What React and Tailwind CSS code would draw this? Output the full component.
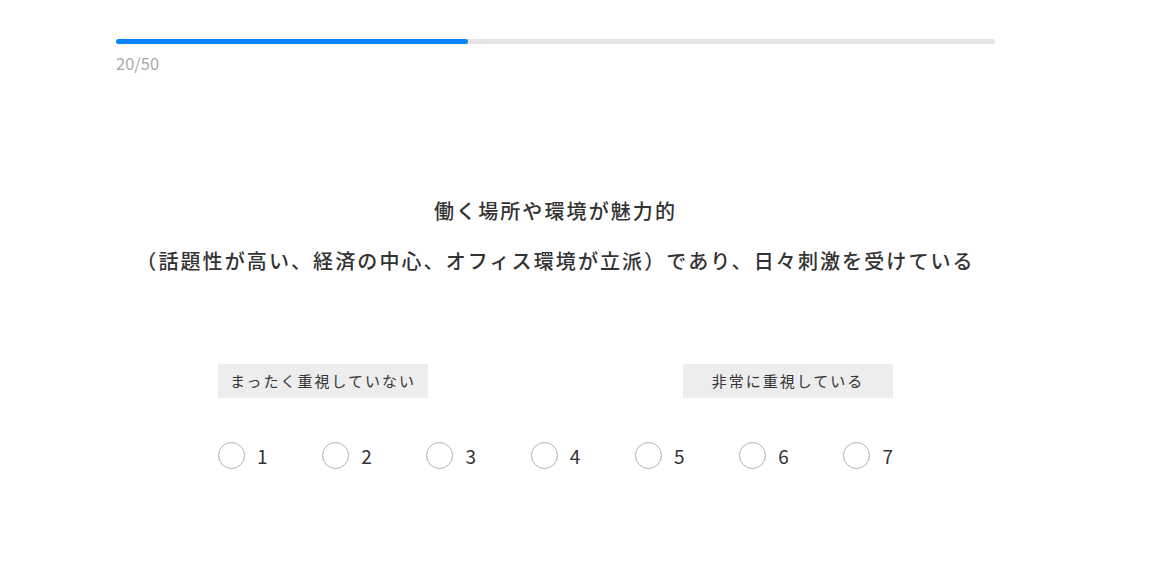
import { useState } from 'react';

const QUESTION_TITLE = '働く場所や環境が魅力的';
const QUESTION_SUB = '（話題性が高い、経済の中心、オフィス環境が立派）であり、日々刺激を受けている';

export default function App() {
  const [value, setValue] = useState(null);
  const current = 20;
  const total = 50;
  const pct = (current / total) * 100;

  return (
    <div
      className="w-[1152px] h-[571px] bg-white text-[#333]"
      style={{ fontFamily: '"Noto Sans CJK JP", "Noto Sans", sans-serif' }}
    >
      <div className="ml-[116px] w-[879px] pt-[39px]">
        {/* Progress */}
        <div className="h-[5px] w-full rounded-full bg-[#e3e3e3]">
          <div className="h-full rounded-full bg-[#0a84ff]" style={{ width: `${pct}%` }} />
        </div>
        <div className="mt-[9px] text-[16.5px] leading-[20px] text-[#aaa]">
          {current}/{total}
        </div>

        {/* Question */}
        <div className="mt-[123px] text-center text-[20px] font-medium tracking-[2.1px] text-[#333]">
          <p className="leading-[30px]">{QUESTION_TITLE}</p>
          <p className="mt-[20px] leading-[30px]">{QUESTION_SUB}</p>
        </div>

        {/* Scale */}
        <div className="mx-auto mt-[88px] w-[675px]">
          <div className="flex justify-between">
            <div className="w-[210px] h-[34px] bg-[#ededed] flex items-center justify-center text-[15px] tracking-[2px] text-[#333]">
              まったく重視していない
            </div>
            <div className="w-[210px] h-[34px] bg-[#ededed] flex items-center justify-center text-[15px] tracking-[2px] text-[#333]">
              非常に重視している
            </div>
          </div>

          <div className="mt-[44px] flex">
            {[1, 2, 3, 4, 5, 6, 7].map(n => (
              <label
                key={n}
                onClick={() => setValue(n)}
                className={`flex items-center gap-[12px] cursor-pointer ${n < 7 ? 'w-[104.5px]' : ''}`}
              >
                <span className="w-[27px] h-[27px] rounded-full border-[1.5px] border-[#b0b0b0] bg-white flex items-center justify-center">
                  {value === n && <span className="w-[13px] h-[13px] rounded-full bg-[#0a84ff]" />}
                </span>
                <span className="text-[19px] leading-[26px] text-[#333]">{n}</span>
              </label>
            ))}
          </div>
        </div>
      </div>
    </div>
  );
}
